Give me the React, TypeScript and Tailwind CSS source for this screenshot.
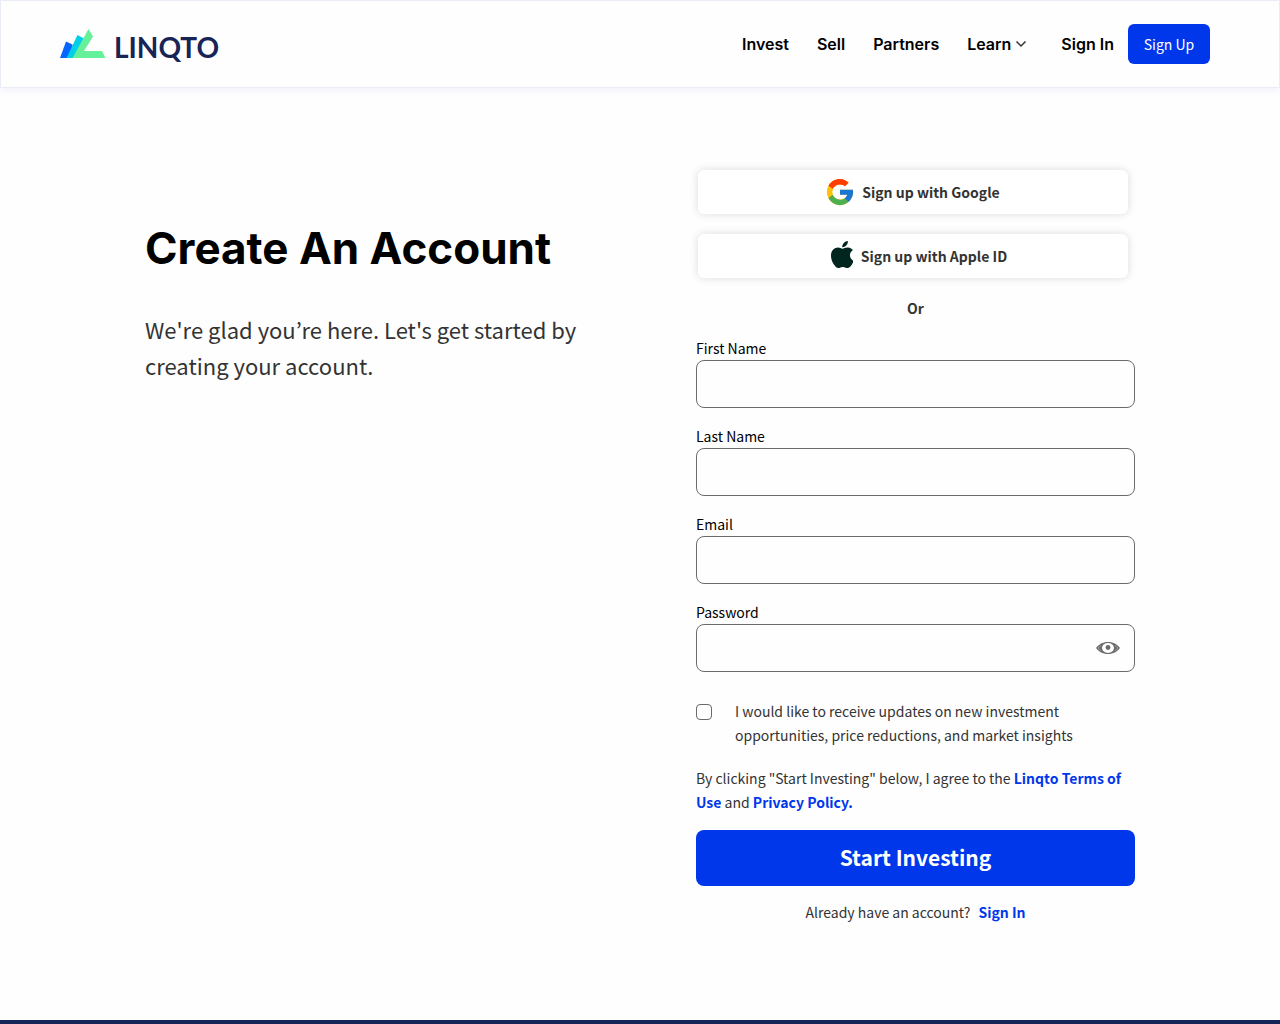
import React, { useState } from "react";

const FIELDS = [
  { id: "firstName", label: "First Name", type: "text" },
  { id: "lastName", label: "Last Name", type: "text" },
  { id: "email", label: "Email", type: "email" },
];

const NAV = ["Invest", "Sell", "Partners"];

function LogoMark() {
  return (
    <svg width="46" height="30" viewBox="0 0 46 30" aria-hidden="true">
      <path d="M0 29 6 12.500 12.500 15.500V29Z" fill="#0866ff" />
      <path d="M6.500 29 17.500 6 24 9.500 16 29Z" fill="#00cfe8" />
      <path d="M12.500 29 28.500 0 33 7.500 24 22H42L45.500 29Z" fill="#65f09a" />
    </svg>
  );
}

function GoogleIcon() {
  return (
    <svg width="28" height="28" viewBox="0 0 48 48" aria-hidden="true">
      <path fill="#FFC107" d="M45 20H24v8.500h12.500C34.700 33.500 29.800 37 24 37c-7.200 0-13-5.800-13-13s5.800-13 13-13c3.300 0 6.300 1.200 8.600 3.300l6.100-6.100C34.800 4.200 29.700 1.500 24 1.500 11.600 1.500 1.500 11.600 1.500 24S11.600 46.500 24 46.500 46.500 36.400 46.500 24c0-1.400-.2-2.700-.4-4Z" />
      <path fill="#FF3D00" d="m4.200 13.200 7.300 5.400C13.400 14.100 18.300 11 24 11c3.300 0 6.300 1.200 8.600 3.300l6.100-6.100C34.800 4.200 29.700 1.500 24 1.500c-8.600 0-16 4.600-19.800 11.700Z" />
      <path fill="#4CAF50" d="M24 46.500c5.600 0 10.700-2.100 14.600-5.600l-6.800-5.700C29.600 36.600 26.900 37.300 24 37.300c-5.700 0-10.700-3.500-12.500-8.500l-7.300 5.600C7.900 41.600 15.400 46.500 24 46.500Z" />
      <path fill="#1976D2" d="M46.100 20H24v8.500h12.500c-.9 2.600-2.600 4.800-4.700 6.700l6.800 5.700C38.100 41.400 46.500 35 46.500 24c0-1.400-.2-2.700-.4-4Z" />
    </svg>
  );
}

function AppleIcon() {
  return (
    <svg width="22" height="27" viewBox="0 0 790 1000" preserveAspectRatio="none" className="mb-1 ml-3" aria-hidden="true">
      <path
        fill="#00261f"
        d="M788.100 340.900c-5.800 4.500-108.200 62.200-108.200 190.500 0 148.400 130.300 200.900 134.200 202.200-.6 3.200-20.700 71.900-68.700 141.900-42.800 61.600-87.500 123.100-155.500 123.100s-85.500-39.500-164-39.500c-76.500 0-103.700 40.800-165.900 40.800s-105.600-57-155.500-127C46.700 790.700 0 663 0 541.800c0-194.400 126.400-297.500 250.800-297.500 66.100 0 121.200 43.400 162.700 43.400 39.500 0 101.100-46 176.300-46 28.500 0 130.900 2.600 198.300 99.200zm-234-181.500c31.100-36.900 53.100-88.100 53.100-139.300 0-7.100-.6-14.300-1.900-20.100-50.600 1.900-110.800 33.700-147.100 75.800-28.500 32.400-55.100 83.600-55.100 135.500 0 7.800 1.300 15.600 1.900 18.100 3.200.6 8.400 1.300 13.600 1.300 45.400 0 102.500-30.400 135.500-71.300z"
      />
    </svg>
  );
}

function EyeIcon() {
  return (
    <svg width="24" height="12" viewBox="0 0 24 12" aria-hidden="true">
      <path fill="#6b6b6b" d="M0 6C3 2.200 6.500 0 12 0s9 2.200 12 6c-3 3.800-6.500 6-12 6S3 9.800 0 6Z" />
      <ellipse cx="12" cy="6" rx="6" ry="5" fill="#fefefe" />
      <circle cx="12" cy="5.500" r="2.400" fill="#6b6b6b" />
      <path d="M5 3.500C3.800 4.200 3 5 2.300 6c.7 1 1.500 1.800 2.700 2.500M19 3.500c1.200.7 2 1.500 2.700 2.500-.7 1-1.500 1.800-2.700 2.500" stroke="#b8b8b8" strokeWidth=".7" fill="none" />
    </svg>
  );
}

function SocialButton({ icon, children }: { icon: React.ReactNode; children: React.ReactNode }) {
  return (
    <button
      type="button"
      className="flex h-11 w-full items-center justify-center gap-2 rounded-md bg-white font-bold text-[#333] shadow-[0_0_8px_rgba(0,0,0,0.14)]"
    >
      {icon}
      <span>{children}</span>
    </button>
  );
}

const inputClass = "block h-12 w-full rounded-lg border border-[#6b6b6b] bg-transparent px-4 text-base";

export default function App() {
  const [visible, setVisible] = useState(false);
  return (
    <div className="flex min-h-screen flex-col bg-[#fefefe] font-['Noto_Sans_CJK_KR',sans-serif] text-[14px] leading-6 text-[#333]">
      <header className="flex h-[88px] items-center justify-between border border-[#eaecf6] pr-[69px] pl-[59px] shadow-[0_2px_8px_rgba(60,80,200,0.08)]">
        <a href="#" className="flex items-end gap-2 text-[#182455]">
          <LogoMark />
          <span className="font-[Lato,sans-serif] text-[28px] leading-6 font-bold">LINQTO</span>
        </a>
        <nav className="flex items-center font-[Inter,sans-serif] text-[16px] font-semibold text-black">
          <div className="flex gap-7">
            {NAV.map((item) => (
              <a key={item} href="#">{item}</a>
            ))}
            <button type="button" className="flex items-center gap-1">
              Learn
              <svg width="12" height="8" viewBox="0 0 12 8" fill="none" stroke="#333" strokeWidth="1.500" aria-hidden="true">
                <path d="m1.500 1.500 4.500 4.500 4.500-4.500" />
              </svg>
            </button>
          </div>
          <a href="#" className="ml-[34px]">Sign In</a>
          <a
            href="#"
            className="ml-[14px] flex h-10 w-[82px] items-center justify-center rounded-md bg-[#0037eb] font-['Noto_Sans_CJK_KR',sans-serif] text-[14px] font-normal text-white"
          >
            Sign Up
          </a>
        </nav>
      </header>

      <main className="mx-auto grid w-full max-w-[990px] flex-1 grid-cols-2 gap-28 pt-[82px] pb-20">
        <section className="pt-[52px]">
          <h1 className="font-[Inter,sans-serif] text-[44px] leading-[52px] font-bold whitespace-nowrap text-black">
            Create An Account
          </h1>
          <p className="mt-[37px] text-[22px] leading-9">
            We're glad you’re here. Let's get started by creating your account.
          </p>
        </section>

        <form onSubmit={(e) => e.preventDefault()}>
          <div className="mr-[7px] ml-0.5 flex flex-col gap-5">
            <SocialButton icon={<GoogleIcon />}>Sign up with Google</SocialButton>
            <SocialButton icon={<AppleIcon />}>Sign up with Apple ID</SocialButton>
          </div>
          <p className="mt-[18px] text-center font-bold">Or</p>
          <div className="mt-4 flex flex-col gap-4">
            {FIELDS.map((f) => (
              <div key={f.id}>
                <label htmlFor={f.id} className="block text-black">{f.label}</label>
                <input id={f.id} type={f.type} className={inputClass} />
              </div>
            ))}
            <div>
              <label htmlFor="password" className="block text-black">Password</label>
              <div className="relative">
                <input id="password" type={visible ? "text" : "password"} className={inputClass} />
                <button
                  type="button"
                  aria-label="Show password"
                  onClick={() => setVisible(!visible)}
                  className="absolute inset-y-0 right-[15px] flex items-center"
                >
                  <EyeIcon />
                </button>
              </div>
            </div>
          </div>
          <div className="mt-[27px] flex gap-[23px]">
            <input
              id="updates"
              type="checkbox"
              className="mt-[5px] size-4 shrink-0 appearance-none rounded-sm border border-[#6b6b6b] checked:bg-[#0037eb]"
            />
            <label htmlFor="updates" className="max-w-[360px]">
              I would like to receive updates on new investment opportunities, price reductions, and market insights
            </label>
          </div>
          <p className="mt-[19px]">
            By clicking "Start Investing" below, I agree to the{" "}
            <a href="#" className="font-bold text-[#0037eb]">Linqto Terms of Use</a> and{" "}
            <a href="#" className="font-bold text-[#0037eb]">Privacy Policy.</a>
          </p>
          <button
            type="submit"
            className="mt-4 flex h-14 w-full items-center justify-center rounded-lg bg-[#0037eb] pb-0.5 text-[21px] font-bold text-white"
          >
            Start Investing
          </button>
          <p className="mt-[14px] flex justify-center gap-2">
            Already have an account?
            <a href="#" className="font-bold text-[#0037eb]">Sign In</a>
          </p>
        </form>
      </main>

      <footer className="h-1 bg-[#152457]" />
    </div>
  );
}
